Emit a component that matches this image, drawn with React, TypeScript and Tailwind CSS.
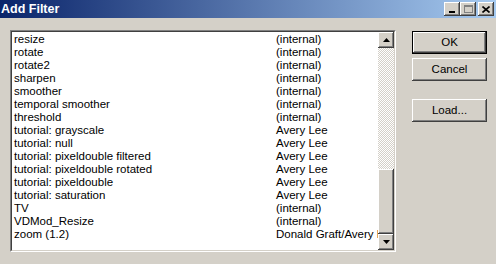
import React from "react";

const rows: [string, string][] = [
  ["resize", "(internal)"],
  ["rotate", "(internal)"],
  ["rotate2", "(internal)"],
  ["sharpen", "(internal)"],
  ["smoother", "(internal)"],
  ["temporal smoother", "(internal)"],
  ["threshold", "(internal)"],
  ["tutorial: grayscale", "Avery Lee"],
  ["tutorial: null", "Avery Lee"],
  ["tutorial: pixeldouble filtered", "Avery Lee"],
  ["tutorial: pixeldouble rotated", "Avery Lee"],
  ["tutorial: pixeldouble", "Avery Lee"],
  ["tutorial: saturation", "Avery Lee"],
  ["TV", "(internal)"],
  ["VDMod_Resize", "(internal)"],
  ["zoom (1.2)", "Donald Graft/Avery Lee"],
];

const raised =
  "shadow-[inset_-1px_-1px_#404040,inset_1px_1px_#ffffff,inset_-2px_-2px_#808080,inset_2px_2px_#d4d0c8]";

function TitleBtn({ children }: { children: React.ReactNode }) {
  return (
    <div className={`w-[16px] h-[14px] bg-[#d4d0c8] flex items-center justify-center ${raised}`}>
      {children}
    </div>
  );
}

function Btn({ label, def }: { label: string; def?: boolean }) {
  return (
    <div className={`w-[75px] h-[23px] ${def ? "border border-black" : ""}`}>
      <div
        className={`w-full h-full flex items-center justify-center text-black text-[11.5px] ${raised}`}
      >
        {label}
      </div>
    </div>
  );
}

export default function App() {
  return (
    <div
      className="w-[496px] h-[264px] bg-[#d4d0c8] flex flex-col overflow-hidden"
      style={{ fontFamily: '"Liberation Sans", Arial, sans-serif' }}
    >
      <div className="h-[18px] bg-[linear-gradient(to_right,#0a246a,#a6caf0)] flex items-center pl-[1px] pr-[2px]">
        <div className="text-white font-bold text-[12.5px] leading-none flex-1">Add Filter</div>
        <div className="flex items-center">
          <TitleBtn>
            <div className="w-[6px] h-[2px] bg-black mt-[6px] -ml-[1px]" />
          </TitleBtn>
          <TitleBtn>
            <div className="w-[9px] h-[8px] border border-[#808080] border-t-2" />
          </TitleBtn>
          <div className="w-[2px]" />
          <TitleBtn>
            <svg width="8" height="7" viewBox="0 0 8 7">
              <path d="M0.5 0.5 L7.5 6.5 M7.5 0.5 L0.5 6.5" stroke="black" strokeWidth="1.6" />
            </svg>
          </TitleBtn>
        </div>
      </div>

      <div className="flex pl-[10px] pt-[12px]">
        <div className="w-[386px] h-[222px] border border-t-[#808080] border-l-[#808080] border-b-white border-r-white">
          <div className="w-full h-full border border-t-[#404040] border-l-[#404040] border-b-[#d4d0c8] border-r-[#d4d0c8] bg-white flex">
            <div className="flex-1 min-w-0 overflow-hidden text-[11.5px] text-black pt-[1px]">
              {rows.map(([a, b]) => (
                <div key={a} className="h-[13px] leading-[13px] flex whitespace-nowrap">
                  <div className="w-[264px] shrink-0 pl-[2px]">{a}</div>
                  <div className="shrink-0">{b}</div>
                </div>
              ))}
            </div>
            <div className="w-[16px] shrink-0 flex flex-col">
              <div className={`h-[16px] bg-[#d4d0c8] flex items-center justify-center ${raised}`}>
                <svg width="7" height="4" viewBox="0 0 7 4">
                  <path d="M3.5 0 L7 4 L0 4 Z" fill="black" />
                </svg>
              </div>
              <div className="h-[121px] bg-[repeating-conic-gradient(#d4d0c8_0_25%,#ffffff_0_50%)] bg-[length:2px_2px]" />
              <div className={`h-[65px] bg-[#d4d0c8] ${raised}`} />
              <div className={`h-[16px] bg-[#d4d0c8] flex items-center justify-center ${raised}`}>
                <svg width="7" height="4" viewBox="0 0 7 4">
                  <path d="M0 0 L7 0 L3.5 4 Z" fill="black" />
                </svg>
              </div>
            </div>
          </div>
        </div>

        <div className="ml-[16px] mt-[1px] flex flex-col">
          <Btn label="OK" def />
          <div className="h-[4px]" />
          <Btn label="Cancel" />
          <div className="h-[18px]" />
          <Btn label="Load..." />
        </div>
      </div>
    </div>
  );
}
